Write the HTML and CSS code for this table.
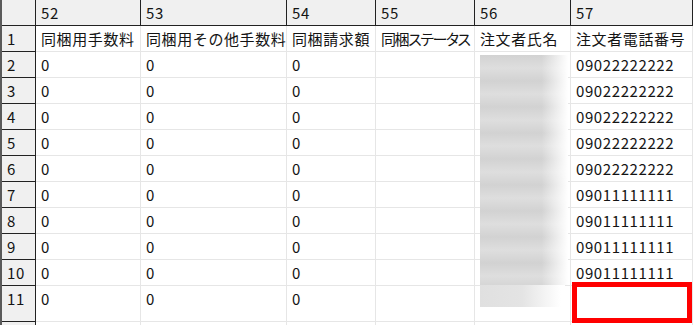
FILE: index.html
```html
<!DOCTYPE html>
<html lang="ja">
<head>
<meta charset="utf-8">
<link rel="stylesheet" href="styles.css">
</head>
<body>
<div class="sheet">
  <div class="edge"></div>
  <div class="grid">
    <div class="ch corner"></div>
    <div class="ch">52</div>
    <div class="ch">53</div>
    <div class="ch">54</div>
    <div class="ch">55</div>
    <div class="ch">56</div>
    <div class="ch last">57</div>

    <div class="rh">1</div>
    <div class="c">同梱用手数料</div>
    <div class="c">同梱用その他手数料</div>
    <div class="c">同梱請求額</div>
    <div class="c kana">同梱ステータス</div>
    <div class="c">注文者氏名</div>
    <div class="c">注文者電話番号</div>

    <div class="rh">2</div><div class="c">0</div><div class="c">0</div><div class="c">0</div><div class="c"></div><div class="c"></div><div class="c">09022222222</div>
    <div class="rh">3</div><div class="c">0</div><div class="c">0</div><div class="c">0</div><div class="c"></div><div class="c"></div><div class="c">09022222222</div>
    <div class="rh">4</div><div class="c">0</div><div class="c">0</div><div class="c">0</div><div class="c"></div><div class="c"></div><div class="c">09022222222</div>
    <div class="rh">5</div><div class="c">0</div><div class="c">0</div><div class="c">0</div><div class="c"></div><div class="c"></div><div class="c">09022222222</div>
    <div class="rh">6</div><div class="c">0</div><div class="c">0</div><div class="c">0</div><div class="c"></div><div class="c"></div><div class="c">09022222222</div>
    <div class="rh">7</div><div class="c">0</div><div class="c">0</div><div class="c">0</div><div class="c"></div><div class="c"></div><div class="c">09011111111</div>
    <div class="rh">8</div><div class="c">0</div><div class="c">0</div><div class="c">0</div><div class="c"></div><div class="c"></div><div class="c">09011111111</div>
    <div class="rh">9</div><div class="c">0</div><div class="c">0</div><div class="c">0</div><div class="c"></div><div class="c"></div><div class="c">09011111111</div>
    <div class="rh">10</div><div class="c">0</div><div class="c">0</div><div class="c">0</div><div class="c"></div><div class="c"></div><div class="c">09011111111</div>
    <div class="rh">11</div><div class="c">0</div><div class="c">0</div><div class="c">0</div><div class="c"></div><div class="c"></div><div class="c"></div>
    <div class="rh"></div><div class="c"></div><div class="c"></div><div class="c"></div><div class="c"></div><div class="c"></div><div class="c"></div>
  </div>
  <div class="blurred"></div>
  <div class="blurred-end"></div>
  <div class="highlight"></div>
</div>
</body>
</html>
```

FILE: styles.css
```css
* { box-sizing: border-box; }
html, body {
  margin: 0;
  padding: 0;
  background: #ffffff;
  overflow: hidden;
}
body {
  width: 693px;
  height: 325px;
  font-family: "Noto Sans CJK JP", "Noto Sans", sans-serif;
  font-size: 15px;
  letter-spacing: 0.6px;
  color: #141414;
}
.sheet {
  position: relative;
  display: flex;
  width: 693px;
  height: 325px;
  overflow: hidden;
}
.edge {
  width: 2px;
  flex: none;
  background: #5a5a5a;
}
.grid {
  display: grid;
  grid-template-columns: 34px 105px 146px 89px 99px 96px 122px;
  grid-template-rows: 26px repeat(10, 26px) 36px 26px;
  align-content: start;
}
.ch {
  background: #f0f0f0;
  border-right: 1px solid #222;
  border-bottom: 1px solid #222;
  padding-left: 5px;
  line-height: 25px;
  white-space: nowrap;
  overflow: hidden;
}
.rh {
  background: #f0f0f0;
  border-right: 1px solid #222;
  border-bottom: 1px solid #222;
  padding-left: 5px;
  line-height: 25px;
}
.c {
  border-right: 1px solid #e6e6e6;
  border-bottom: 1px solid #e6e6e6;
  padding-left: 5px;
  line-height: 25px;
  white-space: nowrap;
  overflow: hidden;
}
.kana {
  font-feature-settings: "palt";
  letter-spacing: -1.4px;
}
.blurred {
  position: absolute;
  left: 480px;
  top: 55px;
  width: 88px;
  height: 230px;
  background:
    linear-gradient(to right, rgba(255,255,255,0) 70%, #ffffff 100%),
    repeating-linear-gradient(to bottom, #d2d2d2 0px, #dedede 13px, #d2d2d2 26px);
}
.blurred-end {
  position: absolute;
  left: 480px;
  top: 285px;
  width: 85px;
  height: 22px;
  background: linear-gradient(to right, #e0e0e0 0%, #e4e4e4 50%, #ffffff 95%);
}
.highlight {
  position: absolute;
  left: 572px;
  top: 282px;
  width: 120px;
  height: 41px;
  border: 5px solid #ff0000;
  background: #ffffff;
}
```
